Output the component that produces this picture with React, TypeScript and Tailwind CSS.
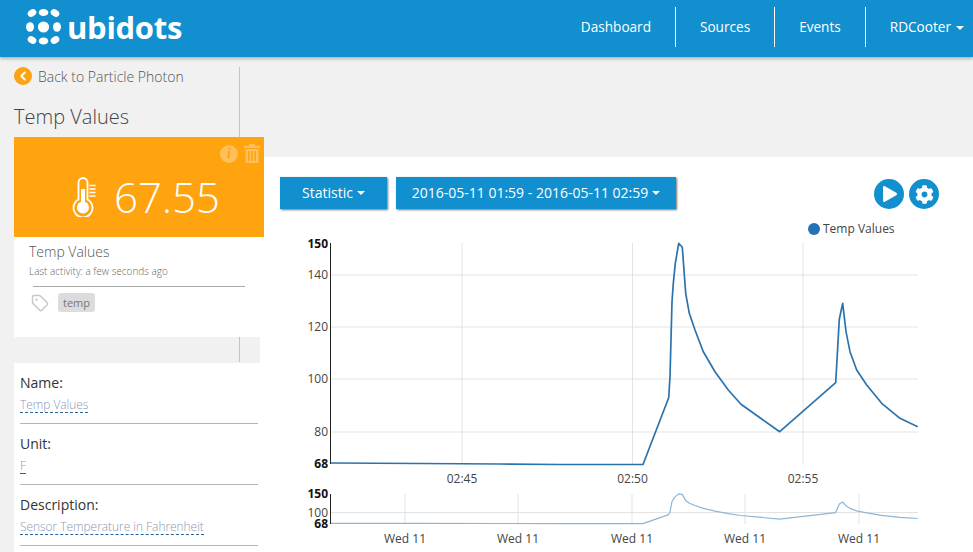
import { ChevronLeft, Tag } from 'lucide-react';
import { FaCog } from 'react-icons/fa';

const points: [number, number][] = [
  [331, 463], [420, 463.5], [500, 464], [560, 464.5], [643, 464.5], [668.7, 397.7], [670, 376.7], [672, 301.7],
  [673.3, 283.3], [675.3, 263.3], [678.7, 243.3], [682.3, 247.3], [685.7, 293.3], [689.3, 313.3], [695, 330],
  [703.3, 351.7], [715, 371.7], [728.3, 390], [741, 404.3], [779.7, 431.7], [835.7, 382.7], [839.3, 319.3],
  [842.7, 303.3], [846, 331.7], [850, 351.7], [856.7, 370], [866.7, 385], [881.7, 403.3], [900, 418.3], [917.7, 426.7],
];
const mainLine = points.map(([x, y]) => `${x},${y}`).join(' ');
const miniLine = points.map(([x, y]) => `${x},${(523.5 - ((464 - y) / 220) * 29.5).toFixed(1)}`).join(' ');

// cx, cy, rx, ry, tilt
const logoDots: [number, number, number, number, number][] = [
  [32, 14, 4.6, 3.4, -30], [43.5, 13.5, 4.8, 3.6, 0], [55, 14, 4.6, 3.4, 30],
  [30, 28, 4, 4.8, 0], [43.5, 28, 5.6, 5.6, 0], [57, 28, 4, 4.8, 0],
  [32, 41, 4.6, 3.4, 30], [43.5, 42, 4.8, 3.6, 0], [55, 41, 4.6, 3.4, -30],
];

function Logo() {
  return (
    <div className="mb-[3px] flex items-center gap-[4px] pl-[25px]">
      <svg width="38" height="38" viewBox="25 9 38 38" fill="#fff">
        {logoDots.map(([cx, cy, rx, ry, tilt]) => (
          <ellipse key={`${cx}-${cy}`} cx={cx} cy={cy} rx={rx} ry={ry} transform={`rotate(${tilt} ${cx} ${cy})`} />
        ))}
      </svg>
      <span className="text-[31px] font-bold leading-none text-white font-['Open_Sans',sans-serif] tracking-[-0.3px]">ubidots</span>
    </div>
  );
}

function NavItem({ label, last }: { label: string; last?: boolean }) {
  return (
    <div className={`flex h-[40px] items-center ${last ? 'pl-[24px] pr-[9px]' : 'border-r border-white px-[24px]'}`}>
      <span className="text-[13.6px] text-white">{label}</span>
      {last && <span className="ml-[5px] mt-[1px] border-x-[4px] border-t-[4px] border-x-transparent border-t-white" />}
    </div>
  );
}

function Field({ label, value }: { label: string; value: string }) {
  return (
    <div className="h-[61px] border-b border-[#b5b5b5] pt-[11px]">
      <div className="text-[14px] leading-[18px] text-[#333]">{label}</div>
      <div className="mt-[4px] text-[11.9px] leading-[16px] font-light text-[#8a97b3]">
        <span className="border-b border-dashed border-[#2a6496]">{value}</span>
      </div>
    </div>
  );
}

function Thermometer() {
  return (
    <svg width="24" height="40" viewBox="0 0 24 40" fill="none" stroke="#fff">
      <path d="M6.5 22.5V5.5a4.5 4.5 0 0 1 9 0v17a9.5 9.5 0 1 1-9 0z" strokeWidth="1.8" />
      <circle cx="11" cy="30.5" r="6" fill="#fff" stroke="none" />
      <rect x="9" y="12" width="4" height="16" fill="#fff" stroke="none" />
      <path d="M17.5 8.5h6M17.5 12h6M17.5 15.5h6M17.5 19h6" strokeWidth="1.5" />
    </svg>
  );
}

function TrashCan() {
  return (
    <svg className="absolute top-[7px] right-[4px]" width="16" height="19" viewBox="0 0 16 19" fill="#ffc05c">
      <path d="M5.5 0h5l1 2H16v2H0V2h4.500z" />
      <path fillRule="evenodd" d="M1.500 5h13v12.500a1.500 1.500 0 0 1-1.500 1.500H3a1.500 1.500 0 0 1-1.500-1.500zM4 7v10h1.500V7zm3.250 0v10h1.500V7zm3.250 0v10H12V7z" />
    </svg>
  );
}

function Chart() {
  const grid = 'stroke-[#e3e3e3]';
  const axisText = 'fill-[#444] text-[12px]';
  const boldText = 'fill-[#111] text-[12px] font-bold';
  return (
    <svg className="block" width="713" height="332" viewBox="260 220 713 332">
      {[275, 327, 379, 432].map(y => <line key={y} x1="331" x2="918" y1={y} y2={y} className={grid} />)}
      {[462, 632.5, 803].map(x => <line key={x} x1={x} x2={x} y1="243" y2="464" className={grid} />)}
      <line x1="330.5" x2="330.5" y1="243" y2="464" stroke="#222" />
      <polyline points={mainLine} fill="none" stroke="#2b73ad" strokeWidth="1.7" strokeLinejoin="round" />

      <text x="328" y="248" textAnchor="end" className={boldText}>150</text>
      {[['140', 279], ['120', 331], ['100', 383], ['80', 436]].map(([t, y]) => (
        <text key={t} x="328" y={y} textAnchor="end" className={axisText}>{t}</text>
      ))}
      <text x="328" y="468" textAnchor="end" className={boldText}>68</text>
      {[['02:45', 462], ['02:50', 632.5], ['02:55', 803]].map(([t, x]) => (
        <text key={t} x={x} y="483" textAnchor="middle" className={axisText}>{t}</text>
      ))}

      <line x1="331" x2="918" y1="512.5" y2="512.5" className={grid} />
      {[405, 518, 632, 745, 859].map(x => <line key={x} x1={x} x2={x} y1="494" y2="524" className={grid} />)}
      <line x1="330.5" x2="330.5" y1="494" y2="524" stroke="#222" />
      <polyline points={miniLine} fill="none" stroke="#8db6d6" strokeWidth="1.2" strokeLinejoin="round" />
      <text x="328" y="498" textAnchor="end" className={boldText}>150</text>
      <text x="328" y="517" textAnchor="end" className={axisText}>100</text>
      <text x="328" y="528" textAnchor="end" className={boldText}>68</text>
      {[405, 518, 632, 745, 859].map(x => (
        <text key={x} x={x} y="543" textAnchor="middle" className={axisText}>Wed 11</text>
      ))}
    </svg>
  );
}

export default function App() {
  return (
    <div className="flex h-[552px] w-[973px] flex-col overflow-hidden bg-[#f1f1f1] font-['Open_Sans',sans-serif]">
      <header className="z-10 flex h-[57px] shrink-0 items-center justify-between bg-[#118fce] shadow-[0_2px_3px_rgba(0,0,0,0.25)]">
        <Logo />
        <nav className="mb-[3px] flex items-center">
          <NavItem label="Dashboard" />
          <NavItem label="Sources" />
          <NavItem label="Events" />
          <NavItem label="RDCooter" last />
        </nav>
      </header>

      <div className="flex min-h-0 flex-1">
        <aside className="relative w-[260px] shrink-0 pl-[14px]">
          <div className="flex h-[80px] flex-col pt-[9px]">
            <div className="flex h-[20px] items-center gap-[6px]">
              <span className="flex h-[18px] w-[18px] items-center justify-center rounded-full bg-[#fca311]">
                <ChevronLeft size={14} strokeWidth={3.5} color="#fff" />
              </span>
              <span className="text-[14px] font-light text-[#555]">Back to Particle Photon</span>
            </div>
            <h1 className="mt-[17px] text-[20px] leading-[28px] font-light text-[#444]">Temp Values</h1>
            <div className="absolute top-[10px] left-[239px] h-[70px] border-r border-[#c4c4c4]" />
          </div>
          <div className="w-[246px] bg-white">
            <div className="relative flex h-[100px] w-[250px] items-center bg-[#ffa30f] pt-[20px] pl-[58px] text-white">
              <Thermometer />
              <span className="ml-[18px] text-[42px] leading-none font-light">67.55</span>
              <span className="absolute top-[8px] right-[26px] flex h-[18px] w-[18px] items-center justify-center rounded-full bg-[#ffc05c] font-['Liberation_Serif',serif] text-[14px] leading-none font-bold text-[#ffa30f] italic">i</span>
              <TrashCan />
            </div>
            <div className="h-[100px] px-[15px] pt-[5px]">
              <div className="text-[14px] leading-[20px] font-light text-[#555]">Temp Values</div>
              <div className="mt-[2px] text-[10px] leading-[14px] font-light text-[#666]">Last activity: a few seconds ago</div>
              <div className="mt-[8px] ml-[4px] w-[212px] border-t border-[#aaa]" />
              <div className="mt-[6px] ml-[2px] flex items-center gap-[9px]">
                <Tag size={18} color="#c8c8c8" strokeWidth={2} />
                <span className="rounded-[3px] bg-[#dcdcdc] px-[5px] text-[11px] leading-[19px] text-[#777]">temp</span>
              </div>
            </div>
          </div>
          <div className="relative h-[26px]">
            <div className="absolute top-0 left-[225px] h-[25px] border-r border-[#c4c4c4]" />
          </div>
          <div className="h-[189px] w-[246px] bg-white pr-[2px] pl-[6px]">
            <Field label="Name:" value="Temp Values" />
            <Field label="Unit:" value="F" />
            <Field label="Description:" value="Sensor Temperature in Fahrenheit" />
          </div>
        </aside>

        <main className="mt-[100px] flex-1 bg-white">
          <div className="flex items-start pt-[20px] pl-[20px]">
            <button className="flex h-[32px] w-[107px] items-center justify-center gap-[4px] bg-[#118fce] pb-[2px] text-[14px] text-white shadow-[1px_1px_2px_rgba(0,0,0,0.55)]">
              Statistic<span className="mt-[2px] border-x-[4px] border-t-[4px] border-x-transparent border-t-white" />
            </button>
            <button className="ml-[9px] flex h-[32px] w-[280px] items-center justify-center gap-[4px] bg-[#118fce] pb-[2px] text-[14px] text-white shadow-[1px_1px_2px_rgba(0,0,0,0.55)]">
              2016-05-11 01:59 - 2016-05-11 02:59<span className="mt-[2px] border-x-[4px] border-t-[4px] border-x-transparent border-t-white" />
            </button>
            <div className="mt-[2px] mr-[34px] ml-auto flex gap-[5px]">
              <span className="flex h-[30px] w-[30px] items-center justify-center rounded-full bg-[#118fce]">
                <svg className="ml-[2px]" width="14" height="16" viewBox="0 0 14 16" fill="#fff">
                  <path d="M0 1.200C0 .2 1-.3 1.900.2l11.400 6.600c.9.500.9 1.900 0 2.400L1.900 15.800C1 16.300 0 15.800 0 14.800z" />
                </svg>
              </span>
              <span className="flex h-[30px] w-[30px] items-center justify-center rounded-full bg-[#118fce]">
                <FaCog size={19} color="#fff" />
              </span>
            </div>
          </div>
          <div className="relative pt-[11px]">
            <Chart />
            <div className="absolute top-[12px] left-[548px] flex items-center gap-[3px] text-[12px] leading-[16px] text-[#444]">
              <span className="h-[12px] w-[12px] rounded-full bg-[#2272b5]" />
              Temp Values
            </div>
          </div>
        </main>
      </div>
    </div>
  );
}
